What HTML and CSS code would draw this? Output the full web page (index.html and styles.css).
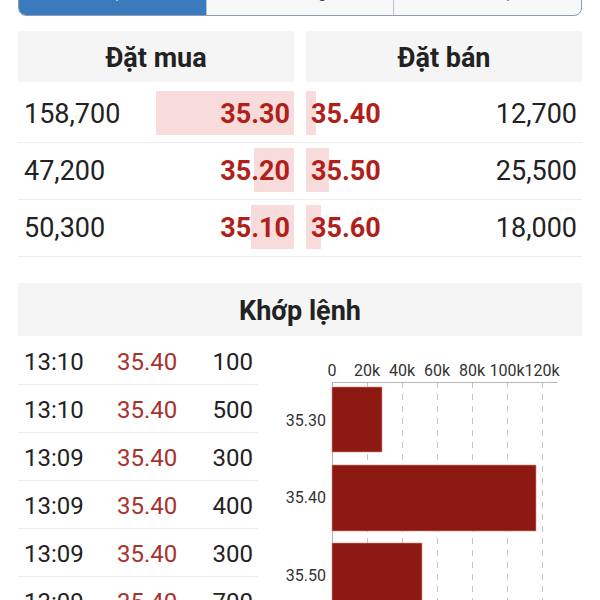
FILE: index.html
```html
<!DOCTYPE html>
<html lang="vi">
<head>
<meta charset="utf-8">
<title>Sổ lệnh</title>
<link rel="stylesheet" href="styles.css">
</head>
<body>
<div class="tabs">
  <div class="tab active">Sổ lệnh</div>
  <div class="tab">Biểu đồ giá</div>
  <div class="tab">Chi tiết lệnh</div>
</div>

<section class="book">
  <div class="book-head">
    <div class="head-cell">Đặt mua</div>
    <div class="head-cell">Đặt bán</div>
  </div>
  <div class="book-row">
    <div class="side buy">
      <span class="vol">158,700</span>
      <span class="bar" style="width:138px"></span>
      <span class="price">35.30</span>
    </div>
    <div class="side sell">
      <span class="bar" style="width:10px"></span>
      <span class="price">35.40</span>
      <span class="vol">12,700</span>
    </div>
  </div>
  <div class="book-row">
    <div class="side buy">
      <span class="vol">47,200</span>
      <span class="bar" style="width:40px"></span>
      <span class="price">35.20</span>
    </div>
    <div class="side sell">
      <span class="bar" style="width:23px"></span>
      <span class="price">35.50</span>
      <span class="vol">25,500</span>
    </div>
  </div>
  <div class="book-row">
    <div class="side buy">
      <span class="vol">50,300</span>
      <span class="bar" style="width:43px"></span>
      <span class="price">35.10</span>
    </div>
    <div class="side sell">
      <span class="bar" style="width:15px"></span>
      <span class="price">35.60</span>
      <span class="vol">18,000</span>
    </div>
  </div>
</section>

<section class="match">
  <div class="match-head">Khớp lệnh</div>
  <div class="match-body">
    <div class="trades">
      <div class="trade"><span class="t">13:10</span><span class="p">35.40</span><span class="v">100</span></div>
      <div class="trade"><span class="t">13:10</span><span class="p">35.40</span><span class="v">500</span></div>
      <div class="trade"><span class="t">13:09</span><span class="p">35.40</span><span class="v">300</span></div>
      <div class="trade"><span class="t">13:09</span><span class="p">35.40</span><span class="v">400</span></div>
      <div class="trade"><span class="t">13:09</span><span class="p">35.40</span><span class="v">300</span></div>
      <div class="trade"><span class="t">13:09</span><span class="p">35.40</span><span class="v">700</span></div>
    </div>
    <div class="chart">
      <svg width="311" height="290" viewBox="0 0 311 290">
        <g class="axis-labels">
          <text x="62" y="39">0</text>
          <text x="97" y="39">20k</text>
          <text x="132" y="39">40k</text>
          <text x="167" y="39">60k</text>
          <text x="202" y="39">80k</text>
          <text x="237" y="39">100k</text>
          <text x="272" y="39">120k</text>
        </g>
        <g class="grid">
          <line x1="97.5" y1="45" x2="97.5" y2="290"/>
          <line x1="132.5" y1="45" x2="132.5" y2="290"/>
          <line x1="167.5" y1="45" x2="167.5" y2="290"/>
          <line x1="202.5" y1="45" x2="202.5" y2="290"/>
          <line x1="237.5" y1="45" x2="237.5" y2="290"/>
          <line x1="272.5" y1="45" x2="272.5" y2="290"/>
        </g>
        <line class="axis" x1="62" y1="45.5" x2="287" y2="45.5"/>
        <line class="axis" x1="62.5" y1="45" x2="62.5" y2="290"/>
        <g class="bars">
          <rect x="62" y="50" width="50" height="65"/>
          <rect x="62" y="128" width="204" height="66"/>
          <rect x="62" y="206" width="90" height="70"/>
        </g>
        <g class="cat-labels">
          <text x="56" y="89">35.30</text>
          <text x="56" y="166">35.40</text>
          <text x="56" y="244">35.50</text>
        </g>
      </svg>
    </div>
  </div>
</section>
</body>
</html>
```

FILE: styles.css
```css
* { box-sizing: border-box; }

body {
  margin: 0;
  background: #ffffff;
  font-family: Roboto, "Liberation Sans", Arial, sans-serif;
  color: #222222;
  overflow: hidden;
}

/* Segmented tabs (cut off at the top) */
.tabs {
  display: flex;
  height: 42px;
  margin: -26px 18px 0;
  border: 1px solid #8d9cae;
  border-radius: 0 0 8px 8px;
  overflow: hidden;
  background: #f7f8fa;
}
.tab {
  flex: 1;
  display: flex;
  align-items: center;
  justify-content: center;
  padding-bottom: 5px;
  font-size: 16px;
  color: #333333;
  border-left: 1px solid #b8c2cc;
}
.tab:first-child { border-left: 0; }
.tab.active {
  background: #3b7bbd;
  color: #ffffff;
}

/* Order book */
.book {
  margin: 15px 18px 0;
}
.book-head,
.book-row {
  display: grid;
  grid-template-columns: 1fr 1fr;
  column-gap: 12px;
}
.book-head { margin-bottom: 4px; }
.head-cell {
  height: 51px;
  padding-top: 2px;
  background: #f5f5f5;
  display: flex;
  align-items: center;
  justify-content: center;
  font-size: 27px;
  font-weight: 700;
  color: #222222;
}
.book-row {
  height: 57px;
  border-bottom: 1px solid #eeeeee;
}
.side {
  position: relative;
  display: flex;
  align-items: center;
  font-size: 27px;
  padding-top: 0;
}
.side .vol { color: #222222; position: relative; z-index: 1; }
.side .price {
  position: relative;
  z-index: 1;
  color: #b11f1a;
  font-weight: 700;
}
.buy { justify-content: space-between; padding-left: 6px; padding-right: 4px; }
.sell { padding-left: 5px; padding-right: 5px; }
.sell .vol { margin-left: auto; }
.bar {
  position: absolute;
  top: 5px;
  bottom: 7px;
  background: #f8dcdc;
}
.buy .bar { right: 0; }
.sell .bar { left: 0; }

/* Matched orders */
.match {
  margin: 26px 18px 0;
}
.match-head {
  height: 53px;
  padding-top: 2px;
  background: #f5f5f5;
  display: flex;
  align-items: center;
  justify-content: center;
  font-size: 27px;
  font-weight: 700;
}
.match-body {
  display: grid;
  grid-template-columns: 240px 1fr;
  column-gap: 12px;
  margin-top: 1px;
}
.trade {
  display: grid;
  grid-template-columns: 93px 1fr auto;
  align-items: center;
  height: 48px;
  padding: 2px 5px 0 6px;
  border-bottom: 1px solid #eeeeee;
  font-size: 24px;
}
.trade .t { color: #222222; }
.trade .p { color: #a8322d; }
.trade .v { color: #222222; }

.chart svg { display: block; }
.axis-labels text {
  font-family: Roboto, "Liberation Sans", sans-serif;
  font-size: 16px;
  fill: #333333;
  text-anchor: middle;
}
.cat-labels text {
  font-family: Roboto, "Liberation Sans", sans-serif;
  font-size: 16px;
  fill: #333333;
  text-anchor: end;
}
.grid line {
  stroke: #c4c4c4;
  stroke-width: 1;
  stroke-dasharray: 6 6;
}
.axis { stroke: #b5b5b5; stroke-width: 1; }
.bars rect {
  fill: #8c1a12;
  stroke: #e08a80;
  stroke-width: 0.6;
}
```
